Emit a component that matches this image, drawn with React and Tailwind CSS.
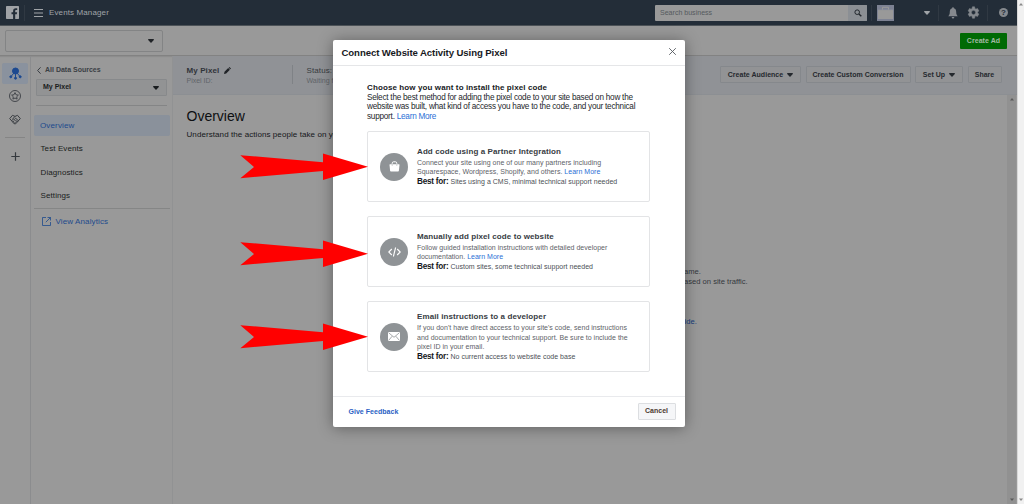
import React from 'react';

function Caret({ className = '' }) {
  return (
    <svg viewBox="0 0 6 4" className={`h-[4px] w-[6px] shrink-0 ${className}`}>
      <path d="M0.2 0H5.8V1L3 4 0.2 1Z" fill="currentColor" />
    </svg>
  );
}

function TopBar() {
  return (
    <header className="flex h-[26px] shrink-0 items-center border-b border-[#4d5358] bg-[#232d38] text-[#a0a4a8]">
      <svg viewBox="0 0 13 13" className="ml-[6px] h-[13px] w-[13px]">
        <rect width="13" height="13" rx="0.7" fill="#a0a3a7" />
        <path d="M7.1 13V8.2H5.5V6.2H7.1V4.9C7.1 3.1 8.1 2.2 9.8 2.2L11.2 2.3V4.1H10.3C9.5 4.1 9.2 4.5 9.2 5.1V6.2H11.1L10.8 8.2H9.2V13Z" fill="#232d38" />
      </svg>
      <div className="ml-[5px] h-[16px] w-px bg-[#303943]" />
      <svg viewBox="0 0 9 8" className="ml-[9px] h-[8px] w-[9px]" stroke="currentColor" strokeWidth="1">
        <path d="M0 .5H9M0 4H9M0 7.5H9" />
      </svg>
      <span className="ml-[6px] w-[200px] pt-px text-[8px] leading-[12px] tracking-[0.120px]">Events Manager</span>
      <div className="ml-auto flex h-[16px] w-[212px] overflow-hidden rounded-[1px] bg-[#999]">
        <span className="grow pl-[5px] text-[7.050px] leading-[16px] text-[#55595e]">Search business</span>
        <span className="flex w-[19px] items-center justify-center bg-[#8b8f94]">
          <svg viewBox="0 0 8 8" className="h-[8px] w-[8px]" fill="none" stroke="#22272d">
            <circle cx="3.2" cy="3.2" r="2.3" />
            <path d="M4.9 4.9L7.3 7.3" strokeWidth="1.4" />
          </svg>
        </span>
      </div>
      <div className="ml-[4px] h-[16px] w-px bg-[#303943]" />
      <svg viewBox="0 0 17 16" className="ml-[5px] h-[16px] w-[17px]">
        <rect width="17" height="16" fill="#7d8293" />
        <path d="M1 5H16V14H1Z" fill="#999" />
        <path d="M5.5 5V2.3H11.5V5" fill="none" stroke="#999" />
        <path d="M1 4.7H16" stroke="#8b8f9b" strokeWidth=".7" />
      </svg>
      <Caret className="ml-[30px]" />
      <div className="ml-[8px] h-[16px] w-px bg-[#303943]" />
      <svg viewBox="0 0 10 12" className="ml-[9px] h-[12px] w-[10px]" fill="#85898e">
        <path d="M5 .2C4.4 .2 4.1 .7 4.1 1.3C2.4 1.8 1.8 3.2 1.8 5C1.8 7.5 1.2 8 .2 9.2H9.8C8.8 8 8.2 7.5 8.2 5C8.2 3.2 7.6 1.8 5.9 1.3C5.9 .7 5.6 .2 5 .2ZM3.7 10A1.3 1.5 0 0 0 6.3 10Z" />
      </svg>
      <svg viewBox="0 0 24 24" className="ml-[9px] h-[13px] w-[13px]" fill="#85898e">
        <path d="M19.4 13c0-.3.1-.6.1-1s0-.7-.1-1l2.5-1.9-2.6-4.5-2.9 1.2c-.6-.5-1.200-.8-1.900-1.100L14 1.500H10L9.500 4.700c-.7.3-1.300.6-1.900 1.100L4.700 4.600 2.100 9.100 4.600 11c0 .3-.1.6-.1 1s0 .7.1 1l-2.500 1.900 2.600 4.500 2.900-1.200c.6.5 1.200.8 1.900 1.100l.5 3.200h4l.5-3.200c.7-.3 1.300-.6 1.900-1.100l2.900 1.200 2.600-4.500ZM12 16a4 4 0 1 1 0-8 4 4 0 0 1 0 8Z" fillRule="evenodd" stroke="#85898e" strokeWidth="1" />
      </svg>
      <div className="ml-[7px] h-[16px] w-px bg-[#303943]" />
      <span className="mr-[9px] ml-[11px] flex h-[9px] w-[9px] items-center justify-center rounded-full bg-[#85898e] text-[8px] leading-[9px] font-bold text-[#232d38]">?</span>
    </header>
  );
}

function Rail() {
  return (
    <nav className="flex w-[31px] shrink-0 flex-col items-center border-r border-[#8b8c8e] pt-[7px] text-[#35393e]">
      <span className="flex h-[21px] w-[26px] items-center justify-center rounded-[2px] bg-[#8a929e]">
        <svg viewBox="0 0 13 13" className="h-[13px] w-[13px]" fill="#1c4990" stroke="#1c4990">
          <circle cx="6.500" cy="4" r="3" />
          <path d="M6.500 5V11M5 6L2 9.500M8 6L11 9.500" fill="none" />
          <circle cx="1.800" cy="9.800" r="1" /><circle cx="6.500" cy="11.200" r="1" /><circle cx="11.200" cy="9.800" r="1" />
        </svg>
      </span>
      <svg viewBox="0 0 12 12" className="mt-[6px] h-[12px] w-[12px]" fill="none" stroke="currentColor" strokeWidth=".85">
        <circle cx="6" cy="6" r="5.500" />
        <path d="M6 2.600L7.050 4.800 9.400 5.100 7.700 6.750 8.100 9.100 6 8 3.900 9.100 4.300 6.750 2.600 5.100 4.950 4.800Z" strokeLinejoin="round" />
      </svg>
      <svg viewBox="0 0 12 11" className="mt-[12px] h-[11px] w-[12px]" fill="none" stroke="currentColor" strokeWidth=".95" strokeLinejoin="round">
        <path d="M.7 4.600L3.500 1.300 6 2.400 8.500 1.300 11.300 4.600 6.700 9.800H5.300ZM6 2.400L3.900 4.700 5.300 5.500 6.700 4.300 9.500 6.800M2.500 6.600L4 5.500M3.800 8L5.400 6.500M5.200 9.500L6.700 7.800M6.400 6L8.400 8" />
      </svg>
      <div className="mt-[12px] h-px w-[20px] bg-[#858585]" />
      <svg viewBox="0 0 9 9" className="mt-[14px] h-[9px] w-[9px]" stroke="currentColor" strokeWidth="1.200">
        <path d="M4.500 .3V8.700M.3 4.500H8.700" />
      </svg>
    </nav>
  );
}

function Sidebar() {
  return (
    <aside className="flex w-[142px] shrink-0 flex-col border-r border-[#919293] text-[#1a1d20]">
      <div className="mt-[7px] flex h-[14px] items-center pl-[6px] text-[7px] font-bold text-[#3b3f45]">
        <svg viewBox="0 0 4 7" className="mr-[4px] h-[7px] w-[4px]" fill="none" stroke="currentColor">
          <path d="M3.600 .3L.6 3.500 3.600 6.700" />
        </svg>
        All Data Sources
      </div>
      <div className="mt-[2px] mr-[5px] ml-[5px] flex h-[17px] items-center justify-between rounded-[1px] border border-[#87898b] bg-[#929394] pr-[7px] pl-[6px] text-[7px] font-bold">
        My Pixel <Caret />
      </div>
      <div className="mt-[9px] mr-[5px] ml-[5px] h-px bg-[#848586]" />
      <div className="mt-[9px] mr-[2px] ml-[3px] h-[21px] rounded-[2px] bg-[#8a919b] pl-[6px] text-[8px] leading-[21px] tracking-[0.150px] text-[#1d4a8d]">Overview</div>
      <div className="mt-[1px] flex flex-col pl-[9.500px] text-[8px] leading-[23.500px] tracking-[0.100px]">
        <span>Test Events</span><span>Diagnostics</span><span>Settings</span>
      </div>
      <div className="mr-[2px] ml-[3px] h-px bg-[#858686]" />
      <div className="mt-[7px] flex items-center pl-[11px] text-[8px] leading-[11px] tracking-[0.120px] text-[#1d4a8d]">
        <svg viewBox="0 0 9 9" className="mr-[4.500px] h-[9px] w-[9px]" fill="none" stroke="currentColor" strokeWidth=".8">
          <path d="M4 .5H.5V8.500H8.500V5M5.500 .5H8.500V3.500M8.500 .5L3.800 5.200" />
        </svg>
        View Analytics
      </div>
    </aside>
  );
}

function GhostButton({ className, label, caret }) {
  return (
    <button className={`flex h-[17px] items-center justify-center gap-[4px] rounded-[1px] border border-[#85888c] bg-[#929395] text-[7px] font-bold tracking-[0.030px] whitespace-nowrap text-[#25292e] ${className}`}>
      <span className="pt-px">{label}</span>
      {caret && <Caret />}
    </button>
  );
}

function Main() {
  return (
    <main className="flex min-w-0 grow flex-col">
      <div className="flex h-[39px] shrink-0 border-b border-[#8c8f93] bg-[#909296] pl-[13.500px]">
        <div className="w-[105px] pt-[9px]">
          <div className="flex items-center gap-[5px] text-[8px] leading-[12px] font-bold tracking-[0.100px] text-[#30343a]">
            My Pixel
            <svg viewBox="0 0 7 7" className="mb-px h-[7px] w-[7px]" fill="#202327">
              <path d="M0 7L.5 4.800 4.200 1.100 5.900 2.800 2.200 6.500ZM4.700 .7L5.400 0 7 1.600 6.300 2.300Z" />
            </svg>
          </div>
          <div className="text-[7px] leading-[8px] text-[#606469]">Pixel ID:</div>
        </div>
        <div className="mt-[9px] h-[19px] w-px bg-[#7f8286]" />
        <div className="w-[120px] pt-[9px] pl-[14px]">
          <div className="text-[8px] leading-[12px] tracking-[0.100px] text-[#373b40]">Status:</div>
          <div className="text-[7px] leading-[8px] text-[#606469]">Waiting for</div>
        </div>
        <div className="mt-[10px] mr-[15.500px] ml-auto flex gap-[4.500px]">
          <GhostButton className="w-[81px]" label="Create Audience" caret />
          <GhostButton className="w-[105px]" label="Create Custom Conversion" />
          <GhostButton className="w-[48px]" label="Set Up" caret />
          <GhostButton className="w-[34px]" label="Share" />
        </div>
      </div>
      <div className="flex min-h-0 grow">
        <div className="grow pl-[13.500px]">
          <h1 className="mt-[12px] text-[14px] leading-[18px] text-[#0d0f11]">Overview</h1>
          <p className="mt-[4px] text-[8px] leading-[12px] tracking-[0.080px] text-[#151719]">Understand the actions people take on your website.</p>
          <div className="mt-[126px] pl-[497.500px] text-[7.600px] leading-[9.500px] whitespace-nowrap text-[#34383d]">
            <p>ame.</p>
            <p>ased on site traffic.</p>
            <p className="mt-[31px] pl-[0.500px] text-[#173c7c]">ide.</p>
          </div>
        </div>
        <div className="mr-px flex w-[9px] flex-col items-center justify-between bg-[#919191] py-[3px] text-[#5a5a5a]">
          <svg viewBox="0 0 4 3" className="h-[3px] w-[4px]"><path d="M0 2.500L2 0 4 2.500Z" fill="currentColor" /></svg>
          <svg viewBox="0 0 4 3" className="h-[3px] w-[4px]"><path d="M0 .5L2 3 4 .5Z" fill="currentColor" /></svg>
        </div>
      </div>
    </main>
  );
}

function Option({ title, best, icon, children, top }) {
  return (
    <section className={`flex h-[71px] w-[283px] shrink-0 rounded-[2px] border border-[#e3e4e6] pl-[12px] ${top}`}>
      <span className="mt-[20.400px] flex h-[28px] w-[28px] shrink-0 items-center justify-center rounded-full bg-[#8f9396]">{icon}</span>
      <div className="flex flex-col justify-center pb-px pl-[9px] whitespace-nowrap">
        <h3 className="text-[8px] leading-[12.500px] font-bold tracking-[0.100px] text-[#373c43]">{title}</h3>
        <p className="text-[7px] leading-[9.100px] tracking-[0.020px] text-[#5d6167]">{children}</p>
        <p className="text-[7px] leading-[11px] tracking-[0.020px] text-[#4b4f56]"><b className="text-[8.200px] tracking-[-0.240px] text-[#15181c]">Best for:</b> {best}</p>
      </div>
    </section>
  );
}

function Link({ children }) {
  return <a className="text-[#2b6fd6]">{children}</a>;
}

function Dialog() {
  return (
    <div role="dialog" className="absolute top-[40px] left-[332.500px] flex h-[387px] w-[352.500px] flex-col rounded-[2px] bg-white shadow-[0_1px_15px_rgba(0,0,0,0.38)]">
      <div className="flex h-[26px] shrink-0 items-center justify-between border-b border-[#e5e6e8] pr-[9px] pb-[2px] pl-[9px]">
        <h2 className="pt-[2px] text-[9.600px] leading-[12px] font-bold tracking-[-0.090px] text-[#17191d]">Connect Website Activity Using Pixel</h2>
        <svg viewBox="0 0 7 7" className="h-[7px] w-[7px]" stroke="#55595f" strokeWidth=".9"><path d="M.2 .2L6.800 6.800M6.800 .2L.2 6.800" /></svg>
      </div>
      <div className="flex grow flex-col pl-[34.500px]">
        <p className="mt-[17px] text-[8.200px] leading-[9.600px] tracking-[-0.240px] whitespace-nowrap text-[#24272b]">
          <b className="text-[8px] tracking-[0.110px] text-[#17191d]">Choose how you want to install the pixel code</b><br />
          Select the best method for adding the pixel code to your site based on how the<br />
          website was built, what kind of access you have to the code, and your technical<br />
          support. <Link>Learn More</Link>
        </p>
        <Option
          top="mt-[10px]"
          title="Add code using a Partner Integration"
          best="Sites using a CMS, minimal technical support needed"
          icon={
            <svg viewBox="0 0 11 11" className="h-[11px] w-[11px]">
              <path d="M.5 3.800Q.5 3.200 1.100 3.200H9.900Q10.500 3.200 10.500 3.800L9.900 9.800Q9.800 10.500 9.100 10.500H1.900Q1.200 10.500 1.100 9.800Z" fill="#fff" />
              <path d="M3.200 4V2.400Q3.200 .8 4.500 .8H6.500Q7.800 .8 7.800 2.400V4" fill="none" stroke="#fff" strokeWidth="1" />
              <path d="M3.200 3.200V4.700M7.800 3.200V4.700" stroke="#8f9396" strokeWidth=".6" />
            </svg>
          }
        >
          Connect your site using one of our many partners including<br />
          Squarespace, Wordpress, Shopify, and others. <Link>Learn More</Link>
        </Option>
        <Option
          top="mt-[14px]"
          title="Manually add pixel code to website"
          best="Custom sites, some technical support needed"
          icon={
            <svg viewBox="0 0 13 10" className="h-[10px] w-[13px]" fill="none" stroke="#fff" strokeWidth="1.100">
              <path d="M3.800 2L.8 5 3.800 8M9.200 2L12.200 5 9.200 8M7.600 .5L5.400 9.500" />
            </svg>
          }
        >
          Follow guided installation instructions with detailed developer<br />
          documentation. <Link>Learn More</Link>
        </Option>
        <Option
          top="mt-[14px]"
          title="Email instructions to a developer"
          best="No current access to website code base"
          icon={
            <svg viewBox="0 0 12 9" className="h-[9px] w-[12px]">
              <rect width="12" height="9" rx=".8" fill="#fff" />
              <path d="M.7 .8L6 5.300 11.300 .8M.7 8.300L4.200 4.200M11.300 8.300L7.800 4.200" fill="none" stroke="#8f9396" strokeWidth=".8" />
            </svg>
          }
        >
          If you don't have direct access to your site's code, send instructions<br />
          and documentation to your technical support. Be sure to include the<br />
          pixel ID in your email.
        </Option>
      </div>
      <div className="flex h-[31px] shrink-0 items-center justify-between border-t border-[#e9eaed] pr-[9.500px] pb-px pl-[16px] text-[7px] font-bold tracking-[0.030px]">
        <a className="pt-px text-[#2b5fc4]">Give Feedback</a>
        <button className="h-[17px] w-[38px] rounded-[1px] border border-[#dcdee1] bg-[#f5f6f8] text-[#4b3a31]">Cancel</button>
      </div>
    </div>
  );
}

function Arrow({ className }) {
  return (
    <svg viewBox="0 0 128 28" className={`absolute left-[240px] h-[28px] w-[128px] ${className}`}>
      <path d="M.3 2.200L83 9.200V.4L128 13.800 83 27V18L.3 25.200 14 14Z" fill="#f00" />
    </svg>
  );
}

export default function App() {
  return (
    <div className="relative flex h-[504px] w-[1024px] overflow-hidden bg-[#999] font-['Liberation_Sans',Arial,sans-serif]">
      <div className="flex w-[1017px] flex-col">
        <TopBar />
        <div className="flex h-[30px] shrink-0 items-center justify-between border-b border-[#828282] pr-[10px] pl-[5px] shadow-[0_1px_1px_rgba(0,0,0,0.08)]">
          <div className="flex h-[22px] w-[158px] items-center justify-end rounded-[2px] border border-[#838485] pr-[8px] text-[#202327]"><Caret /></div>
          <button className="h-[16px] w-[47px] rounded-[1px] bg-[#006a04] pt-px text-[7px] font-bold tracking-[0.050px] text-[#a5b9a5]">Create Ad</button>
        </div>
        <div className="flex min-h-0 grow">
          <Rail />
          <Sidebar />
          <Main />
        </div>
      </div>
      <div className="flex grow flex-col items-center justify-between border-l border-[#d8d8d8] bg-[#f1f1f1] py-[3px] text-[#8a8a8a]">
        <svg viewBox="0 0 4 3" className="h-[3px] w-[4px]"><path d="M0 2.500L2 0 4 2.500Z" fill="currentColor" /></svg>
        <svg viewBox="0 0 4 3" className="h-[3px] w-[4px]"><path d="M0 .5L2 3 4 .5Z" fill="currentColor" /></svg>
      </div>
      <Dialog />
      <Arrow className="top-[153px]" />
      <Arrow className="top-[240px]" />
      <Arrow className="top-[323px]" />
    </div>
  );
}
